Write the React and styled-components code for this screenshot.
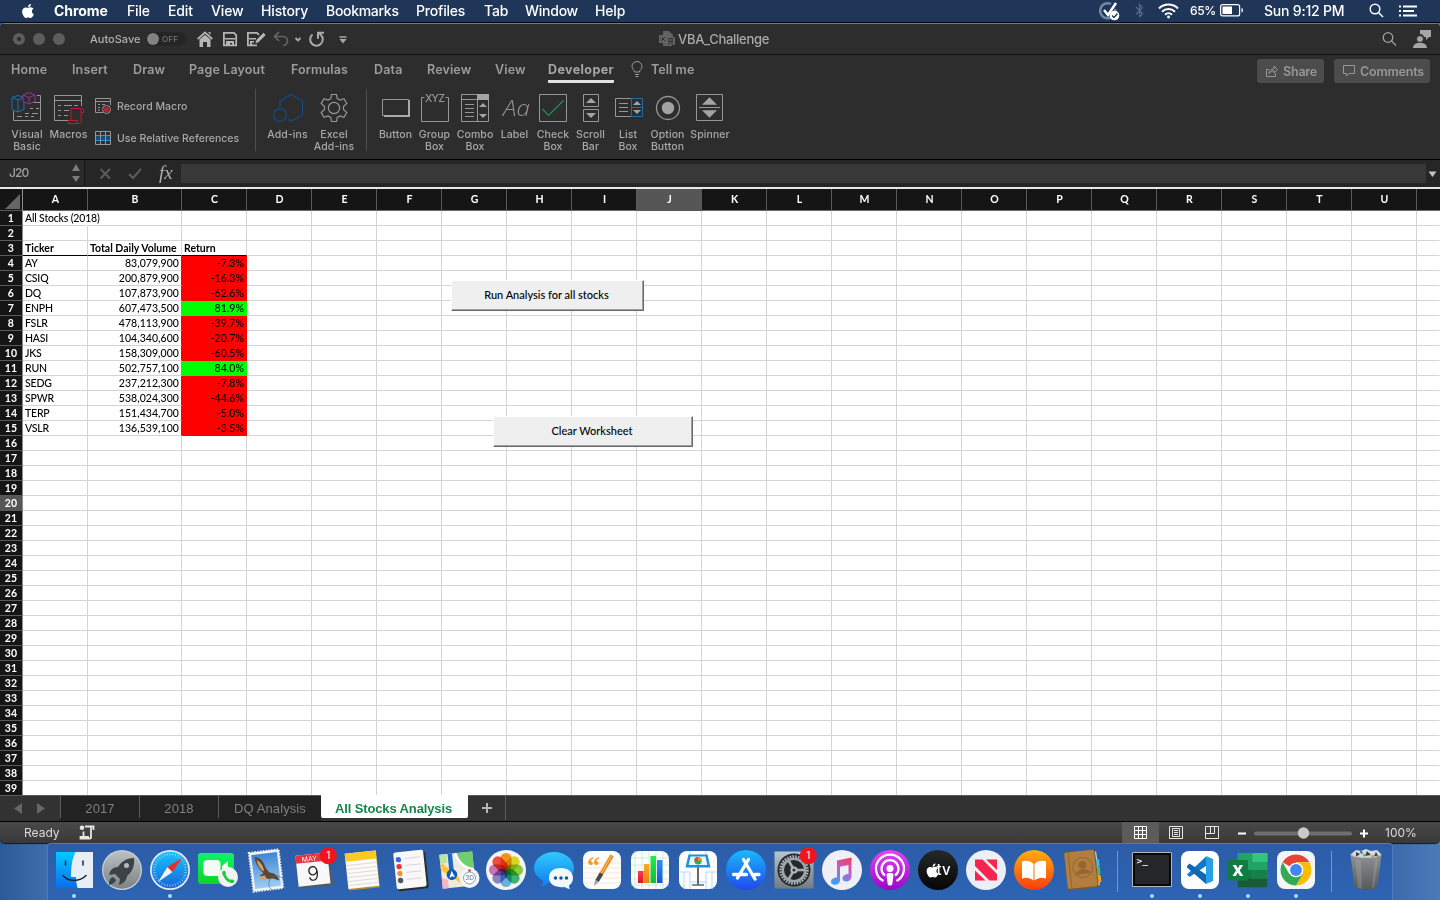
import React from "react";
import styled, { createGlobalStyle } from "styled-components";
import { FaApple, FaBluetoothB } from "react-icons/fa";

const Global = createGlobalStyle`
  * { box-sizing: border-box; }
  body { margin: 0; overflow: hidden; background: #4271b0; font-family: Inter, "Liberation Sans", sans-serif; }
  svg { display: block; flex: none; }
`;

const Desktop = styled.div`
  width: 1440px;
  height: 900px;
  display: flex;
  flex-direction: column;
  overflow: hidden;
  background: linear-gradient(90deg, #2c5a98 0, #3f6fae 50px, #3a6aab 1390px, #4a7ab8 1440px);
`;

/* ---------- system menu bar ---------- */
const MenuBar = styled.header`
  height: 23px;
  flex: none;
  display: flex;
  align-items: center;
  background: #1f3658;
  border-bottom: 1px solid #05080d;
  color: #fff;
  font-size: 14px;
  font-weight: 500;
  padding: 0 0 1px 20px;
`;
const MenuItem = styled.span`
  width: ${(p) => p.$w}px;
  flex: none;
  white-space: nowrap;
  font-weight: ${(p) => (p.$bold ? 700 : 500)};
  letter-spacing: ${(p) => p.$ls ?? -0.15}px;
`;
const AppleSlot = styled.span`
  width: 34px;
  flex: none;
`;
const MenuStatus = styled.div`
  margin-left: auto;
  display: flex;
  align-items: center;
  padding-right: 23px;
`;
const Slot = styled.span`
  width: ${(p) => p.$w}px;
  flex: none;
  white-space: nowrap;
  font-size: ${(p) => p.$size || 14}px;
  letter-spacing: ${(p) => p.$ls || 0}px;
`;

/* ---------- window ---------- */
const Window = styled.main`
  height: 820px;
  flex: none;
  display: flex;
  flex-direction: column;
  border-radius: 5px 5px 5px 5px;
  overflow: hidden;
  background: #2d2d2d;
  box-shadow: 0 1px 1px #10151c;
`;
const TitleBar = styled.div`
  height: 32px;
  flex: none;
  display: flex;
  align-items: center;
  border-top: 1px solid #7a7a7a;
  border-bottom: 1px solid #121212;
  padding-left: 13px;
`;
const Light = styled.i`
  width: 12px;
  height: 12px;
  margin-right: 8px;
  border-radius: 50%;
  background: #5d5d5d;
  display: grid;
  place-items: center;
  &::after {
    content: "";
    width: 4px;
    height: 4px;
    border-radius: 50%;
    background: ${(p) => (p.$dirty ? "#2a2a2a" : "transparent")};
  }
`;
const AutoSave = styled.span`
  width: 56px;
  margin-left: 17px;
  flex: none;
  color: #b0b0b0;
  font-size: 11px;
  font-weight: 500;
  letter-spacing: 0;
  white-space: nowrap;
`;
const Toggle = styled.span`
  width: 40px;
  height: 14px;
  flex: none;
  border-radius: 7px;
  background: #252525;
  display: flex;
  align-items: center;
  gap: 3px;
  color: #767676;
  font-size: 8px;
  font-weight: 500;
  letter-spacing: 0.2px;
  &::before {
    content: "";
    width: 12px;
    height: 12px;
    margin-left: 1px;
    border-radius: 50%;
    background: #828282;
  }
`;
const QuickAccess = styled.div`
  width: 473px;
  display: flex;
  flex: none;
  padding-left: 11px;
`;
const DocTitle = styled.div`
  display: flex;
  align-items: center;
  gap: 3px;
  color: #a9a9a9;
  font-size: 13px;
  font-weight: 500;
  letter-spacing: -0.3px;
`;
const TitleActions = styled.div`
  margin-left: auto;
  display: flex;
  padding-right: 9px;
`;

const TabRow = styled.nav`
  height: 33px;
  flex: none;
  display: flex;
  padding: 6px 10px 0 11px;
  color: #9c9c9c;
  font-size: 12.5px;
  font-weight: 600;
`;
const RibbonTab = styled.span`
  width: ${(p) => p.$w}px;
  height: 22px;
  flex: none;
  line-height: 17px;
  white-space: nowrap;
  letter-spacing: ${(p) => p.$ls ?? 0.15}px;
`;
const ActiveTab = styled(RibbonTab)`
  height: 22px;
  border-bottom: 3px solid #e2e2e0;
  border-radius: 1px;
  color: #a6a6a6;
  font-weight: 700;
`;
const Bulb = styled.span`
  width: 37px;
  padding-left: 17px;
`;
const TabActions = styled.div`
  margin-left: auto;
  display: flex;
  gap: 10px;
  margin-top: -2px;
`;
const ActionButton = styled.button`
  width: ${(p) => p.$w}px;
  height: 24px;
  display: flex;
  align-items: center;
  gap: 4px;
  padding: 0 0 0 8px;
  border: 0;
  border-radius: 3px;
  background: #4c4c4c;
  color: #979797;
  font: 600 12.5px Inter, sans-serif;
  letter-spacing: -0.2px;
`;

const Ribbon = styled.section`
  height: 72px;
  flex: none;
  display: flex;
  padding: 0 0 0 8px;
  border-bottom: 1px solid #000;
`;
const Tool = styled.div`
  width: ${(p) => p.$w}px;
  flex: none;
  display: flex;
  flex-direction: column;
  align-items: center;
  padding-top: 4px;
  color: #a8a8a8;
  font-size: 10.5px;
  font-weight: 500;
  line-height: 12px;
  letter-spacing: 0.1px;
  text-align: center;
  white-space: pre;
  svg { margin-bottom: 5px; }
`;
const MacroList = styled.div`
  width: 160px;
  margin-left: 4px;
  display: flex;
  flex-direction: column;
  gap: 14px;
  padding-top: 9px;
`;
const MacroItem = styled.div`
  height: 18px;
  display: flex;
  align-items: center;
  gap: 5px;
  color: #a8a8a8;
  font-size: 10.5px;
  font-weight: 500;
  letter-spacing: 0.02px;
  white-space: nowrap;
`;
const Divider = styled.i`
  width: 1px;
  height: 62px;
  margin: 1px ${(p) => p.$r}px 0 ${(p) => p.$l}px;
  background: #4e4e4e;
`;

/* ---------- formula bar ---------- */
const FormulaBar = styled.div`
  height: 29px;
  flex: none;
  display: flex;
  background: #262626;
  border-bottom: 2px solid #e6e8e6;
`;
const NameBox = styled.div`
  width: 85px;
  height: 25px;
  display: flex;
  align-items: center;
  justify-content: space-between;
  padding: 0 4px 0 9px;
  background: #2b2b2b;
  border-right: 1px solid #151515;
  color: #a0a0a0;
  font-size: 12px;
  font-weight: 500;
  letter-spacing: -0.9px;
`;
const FormulaInput = styled.div`
  width: 1245px;
  height: 19px;
  margin-top: 4px;
  background: #383838;
`;
const Fx = styled.span`
  width: 36px;
  padding-left: 14px;
  color: #b0b0b0;
  font: italic 19px/26px "Liberation Serif", serif;
  letter-spacing: 0;
`;

/* ---------- sheet ---------- */
const Sheet = styled.section`
  height: 606px;
  flex: none;
  position: relative;
  background: #fff;
  font-family: Lato, "Liberation Sans", sans-serif;
  overflow: hidden;
`;
const SheetRow = styled.div`
  display: flex;
  height: ${(p) => p.$h || 15}px;
`;
const ColHead = styled.div`
  width: ${(p) => p.$w}px;
  flex: none;
  display: flex;
  align-items: center;
  justify-content: center;
  padding: 0 0 1px 1px;
  background: ${(p) => (p.$on ? "#565656" : "#151515")};
  border-right: 1px solid #595959;
  border-bottom: 1px solid ${(p) => (p.$on ? "#565656" : "#6a6a6a")};
  color: #fff;
  font-size: 10.5px;
  font-weight: 700;
`;
const RowHead = styled.div`
  width: 23px;
  flex: none;
  background: ${(p) => (p.$on ? "#565656" : "#151515")};
  border-right: 1px solid #8c8c8c;
  border-bottom: 1px solid #595959;
  color: #fff;
  font-size: 10.5px;
  font-weight: 700;
  line-height: 15px;
  letter-spacing: 0.2px;
  text-align: center;
`;
const Corner = styled(RowHead)`
  padding: 5px 0 0 5px;
`;
const Cell = styled.div`
  width: ${(p) => p.$w}px;
  flex: none;
  padding: 0 2px;
  background: ${(p) => p.$fill || "transparent"};
  border-right: 1px solid ${(p) => p.$right || "#d4d4d4"};
  border-bottom: 1px solid ${(p) => p.$bottom || "#d4d4d4"};
  color: #000;
  font-size: 10.5px;
  font-weight: ${(p) => (p.$bold ? 700 : 500)};
  line-height: 15px;
  letter-spacing: ${(p) => p.$ls ?? -0.18}px;
  text-align: ${(p) => p.$align || "left"};
  white-space: nowrap;
`;
const SheetButton = styled.button`
  position: absolute;
  left: ${(p) => p.$x}px;
  top: ${(p) => p.$y}px;
  width: ${(p) => p.$w}px;
  height: 31px;
  padding: 0 2px 2px 0;
  background: #efefef;
  border: 1px solid #fff;
  border-right-color: #696969;
  border-bottom-color: #696969;
  box-shadow: inset -1px -1px 0 #a0a0a0;
  color: #000;
  font: 500 11px Lato, sans-serif;
  letter-spacing: 0;
`;

/* ---------- sheet tabs and status ---------- */
const SheetTabs = styled.div`
  height: 27px;
  flex: none;
  display: flex;
  background: #323232;
  border-bottom: 1px solid #000;
  border-top: 1px solid #5a5a5a;
  font-family: "Liberation Sans", sans-serif;
`;
const TabNav = styled.div`
  width: 60px;
  height: 25px;
  display: flex;
  align-items: center;
  gap: 15px;
  padding-left: 14px;
`;
const SheetTab = styled.div`
  width: ${(p) => p.$w}px;
  height: 25px;
  display: flex;
  align-items: center;
  justify-content: center;
  background: #222;
  color: #7f7f7f;
  font-size: 13px;
  letter-spacing: 0.1px;
  &::before {
    content: "";
    width: 1px;
    height: 22px;
    margin: -3px auto 0 0;
    background: #5c5c5c;
  }
  &::after {
    content: "";
    width: 0;
    margin-left: auto;
  }
`;
const ActiveSheetTab = styled.div`
  width: 147px;
  height: 23px;
  margin-top: -1px;
  padding-right: 2px;
  border-radius: 0 0 2px 2px;
  background: #fff;
  color: #10884f;
  font-size: 13px;
  font-weight: 700;
  line-height: 27px;
  letter-spacing: -0.12px;
  text-align: center;
`;
const AddSheet = styled.div`
  width: 38px;
  height: 24px;
  display: grid;
  place-items: center;
  border-right: 1px solid #5c5c5c;
`;
const StatusBar = styled.footer`
  height: 21px;
  flex: none;
  display: flex;
  align-items: center;
  background: linear-gradient(#484848, #393939);
  color: #dcdcdc;
  font-size: 12px;
  padding-left: 24px;
`;
const StatusText = styled.span`
  width: ${(p) => p.$w}px;
  flex: none;
  white-space: nowrap;
`;
const ViewButton = styled.span`
  width: ${(p) => p.$w}px;
  height: 21px;
  display: grid;
  place-items: center;
  background: ${(p) => (p.$on ? "#5b5b5b" : "transparent")};
`;
const Zoom = styled.div`
  display: flex;
  align-items: center;
  margin-left: 7px;
`;
const Spacer = styled.i`
  flex: 1;
`;

/* ---------- dock ---------- */
const Dock = styled.div`
  width: 1346px;
  height: 57px;
  margin-left: 47px;
  flex: none;
  display: flex;
  align-items: flex-start;
  padding: 2px 0 0 2px;
  border: 1px solid #4a7cc0;
  border-bottom: 0;
  border-radius: 4px 4px 0 0;
  background: linear-gradient(#2c5ca6, #2d64b4);
`;
const DockItem = styled.div`
  width: 48px;
  height: 54px;
  flex: none;
  display: flex;
  flex-direction: column;
  align-items: center;
  &::after {
    content: "";
    width: 4px;
    height: 4px;
    border-radius: 50%;
    background: ${(p) => (p.$running ? "#a9dcff" : "transparent")};
  }
`;
const DockLine = styled.i`
  width: 1px;
  height: 41px;
  margin: 5px ${(p) => p.$r}px 0 ${(p) => p.$l}px;
  background: #6c98d6;
`;
const Petal = styled.rect`
  mix-blend-mode: multiply;
`;

/* ---------- toolbar drawings ---------- */
const G = "#969696";
const Ico = ({ w = 32, h = 32, vb, children, s = G, sw = 1 }) => (
  <svg width={w} height={h} viewBox={vb || `0 0 ${w} ${h}`} fill="none" stroke={s} strokeWidth={sw}>
    {children}
  </svg>
);

const VisualBasicIcon = () => (
  <Ico>
    <path d="M2.500 19v9.500h27v-25H26M15.500 10.500H30M19 16.500h3m3 0h3M14 21.500h4m3 0h6M6 24.500h5m3 0h3m3 0h3" />
    <path d="M7 3.500l6 2v12l-6 2.500-6-2.500v-12zM1 5.500l6 2.500 6-2.500M7 8v12" stroke="#1a75ae" fill="#2d2d2d" />
    <path d="M18 .5l6 2.500v6.500l-6 2.500-6-2.500V3zM12 3l6 2.500L24 3M18 5.500V12" stroke="#933393" fill="#2d2d2d" />
  </Ico>
);
const MacrosIcon = () => (
  <Ico>
    <path d="M16 28.500H1.500v-25h27V14M1.500 8.500h27M5 13.500h3m3 0h8m2 0h4M5 18.500h3m3 0h5M5 23.500h3m3 0h4" />
    <path d="M18 16.500v12h-3v3h11.500c1 0 1.500-1 1.500-2v-9h2.500v-2.500c0-1-1-1.500-2-1.500H18M28 20v-2M15.500 28.500h9v3" stroke="#bb1c33" />
  </Ico>
);
const RecordIcon = () => (
  <Ico w={17} h={18}>
    <path d="M8 15.500H.5V1.500h15V8M.5 4.500h15M3 7.500h2m2 0h3M3 10.500h2M3 13h2" />
    <circle cx="11.500" cy="12.500" r="4" />
    <circle cx="11.500" cy="12.500" r="2.600" fill="#c21f38" stroke="none" />
  </Ico>
);
const RelativeIcon = () => (
  <Ico w={17} h={18}>
    <path fill="#0f4e86" stroke="none" d="M1 6h15v5H1z" />
    <path d="M.5 2.500h15v13H.5zM5.500 2.500v13M10.500 2.500v13" />
    <path d="M1 6.500h14M1 11.500h14" stroke="#4393ca" />
  </Ico>
);
const AddinsIcon = () => (
  <Ico s="#104d88" sw={1.2}>
    <path d="M8 14.500V9.500L19 2.500l11.500 6.500v14L19 29l-3-1.700M8 16l6 3.300v7L8 29.500 2 26.200v-7z" />
  </Ico>
);
const GearIcon = () => (
  <Ico sw={1.2}>
    <path d="M13.500 2.500h5l.7 4 2.800 1.600 3.900-1.400 2.900 4.700-3.300 3.100v3l3.300 3.100-2.900 4.700-3.900-1.400-2.800 1.600-.7 4h-5l-.7-4-2.800-1.600-3.900 1.400-2.900-4.700 3.300-3.100v-3l-3.300-3.100 2.900-4.700L10 8.100l2.800-1.600z" />
    <circle cx="16" cy="16" r="5.600" />
  </Ico>
);
const ButtonIcon = () => (
  <Ico>
    <path d="M2.500 7.500h26v16h-26z" />
    <path d="M28 8h2v17H4v-2h24z" fill="#aaa" stroke="none" />
  </Ico>
);
const GroupIcon = () => (
  <Ico>
    <path d="M5.500 5.500h-3v24h27v-24h-3" />
    <text x="6" y="9.500" fontSize="10.500" fontFamily="Inter" fill={G} stroke="none" textLength="20">XYZ</text>
  </Ico>
);
const Up = ({ x, y, r = 4, d = 1 }) => <path d={`M${x - r} ${y + (d * r) / 2}h${2 * r}l${-r} ${-d * r}z`} fill="#a3a3a3" stroke="none" />;
const ComboIcon = () => (
  <Ico>
    <path d="M2.500 2.500h27v27h-27zM2.500 7.500h27M18.500 2.500v27M6 12.500h9M6 16.500h9M6 20.500h9M6 24.500h9" />
    <path fill="#a3a3a3" stroke="none" d="M18 2h12v6H18z" />
    <Up x={24} y={13} /><Up x={24} y={24} d={-1} />
  </Ico>
);
const LabelIcon = () => (
  <Ico>
    <text x="4" y="24" fontSize="22" fontStyle="italic" fontFamily="Open Sans" fontWeight="300" fill={G} stroke="none" textLength="27" lengthAdjust="spacingAndGlyphs">Aa</text>
  </Ico>
);
const CheckIcon = () => (
  <Ico>
    <path d="M2.500 2.500h27v27h-27z" />
    <path d="M5.500 17l6 6.500L26.500 8.500" stroke="#1e9455" strokeWidth="1.200" />
  </Ico>
);
const ScrollIcon = () => (
  <Ico>
    <path d="M8.500 2.500h15v12h-15zM8.500 17.500h15v12h-15z" />
    <Up x={16} y={8.500} r={5} /><Up x={16} y={23.500} r={5} d={-1} />
  </Ico>
);
const ListIcon = () => (
  <Ico>
    <path d="M19 6.500H3.500v18H19M7 11.500h9M7 15.500h9M7 19.500h9" />
    <path d="M19.500 6.500h11v18h-11zM19.500 15.500h11" stroke="#1b6fa8" />
    <Up x={25} y={11} /><Up x={25} y={20} d={-1} />
  </Ico>
);
const OptionIcon = () => (
  <Ico sw={1.3}>
    <circle cx="16" cy="16" r="11.500" />
    <circle cx="16" cy="16" r="6.200" fill="#a3a3a3" stroke="none" />
  </Ico>
);
const SpinnerIcon = () => (
  <Ico>
    <path d="M2.500 2.500h26v26h-26zM5 15.500h21" />
    <Up x={15.500} y={9} r={7.500} /><Up x={15.500} y={22} r={7.500} d={-1} />
  </Ico>
);

/* ---------- dock drawings ---------- */
const D = ({ children }) => <svg width="48" height="48" viewBox="0 0 48 48">{children}</svg>;
const Grad = ({ id, a, b, h }) => (
  <linearGradient id={id} x1="0" y1="0" x2={h ? 1 : 0} y2={h ? 0 : 1}>
    <stop offset="0" stopColor={a} /><stop offset="1" stopColor={b} />
  </linearGradient>
);
const Badge = () => (
  <g>
    <circle cx="38.300" cy="9.700" r="8.600" fill="#f01420" />
    <text x="38.300" y="13.300" fontSize="10" fontFamily="Inter" fill="#fff" textAnchor="middle">1</text>
  </g>
);
const Ball = ({ fill }) => <circle cx="24" cy="24" r="20" fill={fill} />;
const spin = (n, fn) => Array.from({ length: n }, (_, i) => fn((i * 360) / n, i));

const Finder = () => (
  <D>
    <defs><Grad id="fi" a="#04c8ff" b="#0b6df0" /></defs>
    <path fill="url(#fi)" d="M6 6h37v36H6z" />
    <path fill="#e8eef6" d="M25.500 6H43v36H27.500c-1-4-1.500-7-1.500-11h-5c0-10 1-18 4.500-25z" />
    <path d="M15.500 15v4M33 15v4M13 29.500c5 6.500 17 6.500 23 0" fill="none" stroke="#17263c" strokeWidth="1.500" strokeLinecap="round" />
  </D>
);
const Launchpad = () => (
  <D>
    <defs><Grad id="la" a="#b9c1c4" b="#7d8283" /></defs>
    <Ball fill="#c9d0d4" /><circle cx="24" cy="24" r="18.800" fill="url(#la)" />
    <path fill="#3d4246" d="M36 12c-8 0-13 4-16 9-5 0-8 3-9 8l6-1 5 5-1 6c4-1 8-5 8-9 5-4 8-10 7-18zM15 31c-3 1-4 4-4 8 3-1 6-2 7-5z" />
    <circle cx="28.500" cy="19.500" r="2.500" fill="#b5babd" />
  </D>
);
const Safari = () => (
  <D>
    <defs><Grad id="sa" a="#17c3fb" b="#1866d8" /></defs>
    <Ball fill="#e8eaec" /><circle cx="24" cy="24" r="18.300" fill="url(#sa)" />
    {spin(36, (a) => <path key={a} d="M24 7v2.500" stroke="#b9e3fa" strokeWidth=".6" transform={`rotate(${a} 24 24)`} />)}
    <path fill="#f3f3f3" d="M12 36l9.500-15 5 5z" /><path fill="#ee2c2c" d="M36.500 11.500L21.500 21l5 5z" />
  </D>
);
const FaceTime = () => (
  <D>
    <defs><Grad id="ft" a="#0df36a" b="#10d32c" /></defs>
    <rect x="4" y="7" width="36" height="31" rx="3" fill="url(#ft)" />
    <rect x="9.500" y="14" width="17" height="16" rx="4" fill="#f4fbf4" /><path fill="#f4fbf4" d="M28 20l6-5v14l-6-4z" />
    <circle cx="34" cy="31" r="10" fill="#f2f4f3" />
    <path fill="none" stroke="#18cc3c" strokeWidth="2.600" strokeLinecap="round" d="M30 27c0 4 4 8.500 8 8.500" />
    <path fill="none" stroke="#18cc3c" strokeWidth="3.400" strokeLinecap="round" d="M30 26.500v1.300M37.300 35.300h1.200" />
  </D>
);
const Mail = () => (
  <D>
    <defs><Grad id="ma" a="#3d86d6" b="#9fcdf2" /></defs>
    <g transform="rotate(-7 24 24)">
      <rect x="9" y="5" width="30" height="39" fill="#f2f4f5" stroke="#f2f4f5" strokeWidth="2" strokeDasharray="1.500 1.300" />
      <path fill="url(#ma)" d="M11 7.500h26v34H11z" />
      <path fill="#5f4630" d="M14 10c6 0 9 6 10 12l3 5c5 1 8 4 9 9l-7-3c-5 1-9-1-12-4l4-2c-4-5-7-11-7-17z" />
      <path fill="#c9a574" d="M16 13c4 3 6 7 6 12l-2-1c-3-4-4-7-4-11zM16 30l6-1 2 4-5 1z" />
      <circle cx="33" cy="39" r="8" fill="none" stroke="#37608c" strokeWidth=".7" opacity=".7" />
    </g>
  </D>
);
const CalendarApp = () => (
  <D>
    <g transform="rotate(-6 24 24)">
      <path fill="#555b61" d="M9 10h31l2 31H8z" />
      <path fill="#f8f8f8" d="M7 8h32v31H7z" /><path fill="#e5343e" d="M7 8h32v8H7z" />
      <text x="20.500" y="14.800" fontSize="6.800" fontFamily="Inter" fill="#fff" textAnchor="middle">MAY</text>
      <text x="23" y="34.500" fontSize="20" fontFamily="Inter" fontWeight="300" fill="#222" textAnchor="middle">9</text>
    </g>
    <Badge />
  </D>
);
const Notes = () => (
  <D>
    <g transform="rotate(-6 24 24)">
      <path fill="#b08c2b" d="M9 7h31v36H9z" /><path fill="#fbfaf6" d="M8.500 6h31v35.500h-31z" /><path fill="#fbc924" d="M8.500 6h31v8h-31z" />
      <path stroke="#cfcfcf" strokeWidth=".7" d="M9 18h30M9 22h30M9 26h30M9 30h30M9 34h30M9 38h30" />
    </g>
  </D>
);
const Reminders = () => (
  <D>
    <g transform="rotate(-6 24 24)">
      <rect x="10" y="7" width="31" height="37" rx="2" fill="#2a2d31" /><rect x="9" y="5" width="30" height="37" rx="2" fill="#f8f8f8" />
      {["#2f68e8", "#ee3131", "#f5932a", "#4a5560"].map((c, i) => <circle key={c} cx="13.500" cy={12.500 + i * 7} r="2.700" fill={c} />)}
      <path stroke="#c9c9c9" strokeWidth=".7" d="M20 12h15M20 19h15M20 26h15M20 33h15" />
    </g>
  </D>
);
const Maps = () => (
  <D>
    <g transform="rotate(-6 24 24)">
      <path fill="#efe9de" d="M7 7h33v34H7z" /><path fill="#6fcf6e" d="M23 7h17v18C31 22 25 16 23 7z" /><path fill="#b9e3a2" d="M7 7h7v9H7z" />
      <path d="M23 7c2 9 8 16 17 18" stroke="#fff" strokeWidth="2.500" fill="none" /><path d="M8 17l17 18 8-8M8 21l21 17" stroke="#fac637" strokeWidth="3.500" fill="none" />
      <path fill="#f6b4c2" d="M7 30l6 3v8H7z" /><path d="M17.500 7v20" stroke="#1c66c4" strokeWidth="4.500" />
      <circle cx="17.500" cy="28" r="5.300" fill="#1459b8" /><path fill="#fff" d="M17.500 24l2.800 7-2.800-1.500-2.800 1.500z" />
    </g>
    <circle cx="35.500" cy="32" r="10" fill="#f4f5f6" /><circle cx="35.500" cy="32" r="6" fill="#fff" stroke="#72879a" strokeWidth=".8" />
    <text x="35.500" y="34.400" fontSize="6.500" fontFamily="Inter" fill="#51708c" textAnchor="middle">3D</text>
    <circle cx="35.500" cy="24.500" r="1.300" fill="#e33" />
  </D>
);
const Photos = () => (
  <D>
    <Ball fill="#f4f4f2" />
    {["#fb9a1e", "#e3df20", "#93d13f", "#3fbb7a", "#6db9e6", "#8f8ad0", "#d07ac0", "#f6513f"].map((c, i) => (
      <Petal key={c} x="18.500" y="7" width="11" height="17" rx="5.500" fill={c} transform={`rotate(${i * 45} 24 24)`} />
    ))}
  </D>
);
const Messages = () => (
  <D>
    <defs><Grad id="me" a="#30c8fb" b="#0f7df5" /></defs>
    <path fill="url(#me)" d="M24 6c11 0 20 7 20 16s-9 15-20 15c-2 0-4 0-5-.500-2 2-5 4-8.500 4 2-2 3-4 2.500-6C7.500 32 4 27 4 22 4 13 13 6 24 6z" />
    <path fill="#f2f7fc" d="M31 22c7 0 12 4 12 10 0 4-2 6-4 7.500 0 1.500.5 2.500 1 3.500-2-.3-4-1-5-2-8 1-16-2-16-9s5-10 12-10z" />
    <path stroke="#195594" strokeWidth="3.600" strokeLinecap="round" d="M25.500 32h0M31 32h0M36.500 32h0" />
  </D>
);
const Card = ({ fill = "#fcfcfc" }) => <rect x="5" y="5" width="38" height="38" rx="8" fill={fill} />;
const Pages = () => (
  <D>
    <Card /><path stroke="#f4dfca" strokeWidth=".7" d="M5 17h38M5 22h38M5 27h38M5 32h38M5 37h38" />
    <text x="9" y="28" fontSize="26" fontFamily="Liberation Serif" fontWeight="700" fill="#f59a2b">“</text>
    <path stroke="#e88b22" strokeWidth="4" d="M34 9.500L22 30" /><path stroke="#ffc064" strokeWidth="1" d="M33.500 10L21 31" /><path stroke="#45484b" strokeWidth="4" d="M23.500 27.500L19 35" /><path fill="#9aa0a5" d="M17.300 33.800l3.600 2L16 40z" />
  </D>
);
const Numbers = () => (
  <D>
    <defs><Grad id="n1" a="#ff3a52" b="#d8122e" /><Grad id="n2" a="#ffab24" b="#e8810e" /><Grad id="n3" a="#24ec4b" b="#0fbb39" /><Grad id="n4" a="#2a94f7" b="#1a52d6" /></defs>
    <Card /><path stroke="#bfeacb" strokeWidth=".7" d="M5 12h38M5 19h38M5 26h38M5 33h38M5 39h38M9 5v38M16 5v38M23 5v38M30 5v38M37 5v38" />
    <path fill="url(#n1)" d="M12 25h5.500v12H12z" /><path fill="url(#n2)" d="M18 18h5.500v19H18z" /><path fill="url(#n3)" d="M24.500 10H30v27h-5.500z" /><path fill="url(#n4)" d="M31 14h5.500v23H31z" />
  </D>
);
const Keynote = () => (
  <D>
    <Card /><path fill="none" stroke="#b8d8f2" strokeWidth="1" d="M5 26h11v10h16V26h11M16 5v4M32 5v4M16 36v7M32 36v7M10 26v17M38 26v17" />
    <path stroke="#5e6b77" strokeWidth="2" d="M24 20v19" /><path stroke="#5e6b77" strokeWidth="1.500" d="M18 39h12" />
    <path fill="#1793df" d="M14.500 8.500h19l3 13h-25z" /><path fill="#eef6fc" d="M16.500 10.500h15l1.800 8.500H14.700z" />
    <circle cx="24" cy="14.800" r="3.700" fill="#28b24b" /><path fill="#f39220" d="M24 14.800v-3.700a3.700 3.700 0 013.700 3.700z" /><path fill="#e43f62" d="M24 14.800h-3.700a3.700 3.700 0 013.700-3.700z" />
  </D>
);
const AppStore = () => (
  <D>
    <defs><Grad id="as" a="#1ab8fb" b="#2148ee" /></defs><Ball fill="url(#as)" />
    <path d="M26.500 13.500L15.500 32M21.500 13.500L33 33M11.500 28.500h13m8 0h4.500" stroke="#fff" strokeWidth="3.300" strokeLinecap="round" />
  </D>
);
const Settings = () => (
  <D>
    <defs><Grad id="se" a="#b5c6cf" b="#737b7f" /></defs>
    <path fill="url(#se)" d="M4.500 5.500h39v37h-39z" /><circle cx="24" cy="24" r="16.500" fill="#25292c" />
    <circle cx="24" cy="24" r="13.500" fill="none" stroke="#b4bcc0" strokeWidth="2.500" strokeDasharray="1.600 1.200" /><circle cx="24" cy="24" r="11.300" fill="none" stroke="#9ea6aa" strokeWidth="2.600" />
    {spin(3, (a) => <path key={a} d="M24 24H35" stroke="#a6adb1" strokeWidth="2.600" transform={`rotate(${a} 24 24)`} />)}
    <circle cx="24" cy="24" r="3.600" fill="#b4bcc0" /><circle cx="24" cy="24" r="1.600" fill="#303538" /><Badge />
  </D>
);
const Music = () => (
  <D>
    <defs>
      <linearGradient id="mu" gradientUnits="userSpaceOnUse" x1="30" y1="12" x2="18" y2="37"><stop offset="0" stopColor="#fb3c62" /><stop offset=".5" stopColor="#b264d8" /><stop offset="1" stopColor="#3f9df8" /></linearGradient>
    </defs>
    <Ball fill="#eef0f5" />
    <path fill="url(#mu)" d="M19 14.500l14.500-3v19c0 6-9 6.500-9 2 0-3 3-4.500 6-4.500v-9l-8.500 1.800V34c0 6-9 6-9 2 0-3 3-4.500 6-4.500z" />
  </D>
);
const Podcasts = () => (
  <D>
    <defs><Grad id="po" a="#e343f7" b="#9909c8" /></defs><Ball fill="url(#po)" />
    <path fill="none" stroke="#fff" strokeWidth="2.200" d="M17.500 35a14 14 0 1113 0M19 29.500a8.500 8.500 0 1110 0" />
    <circle cx="24" cy="22.500" r="3.500" fill="#fff" /><path fill="#fff" d="M20.500 29c0-3 7-3 7 0l-1.200 9c-.3 2-4.300 2-4.600 0z" />
  </D>
);
const AppleTv = () => (
  <D>
    <defs><Grad id="tv" a="#26282b" b="#050505" /></defs><Ball fill="url(#tv)" />
    <FaApple x="10.500" y="16.500" width="12" height="14" color="#fff" />
    <text x="22.500" y="29" fontSize="15" fontFamily="Inter" fontWeight="500" fill="#fff">tv</text>
  </D>
);
const News = () => (
  <D>
    <Ball fill="#eceff3" />
    <path fill="#f6244f" d="M13 13.500h7.500L35 28v6.500h-7.500L13 20zM24 13.500h11V24zM13 24.500l10.500 10H13z" />
  </D>
);
const Books = () => (
  <D>
    <defs><Grad id="bo" a="#ffae10" b="#fa3d0c" /></defs><Ball fill="url(#bo)" />
    <path fill="#fff" d="M23.500 18c-3-3.500-8-4-11.500-2.500v17c4-1.500 8-1 11.500 2zM24.500 18c3-3.500 8-4 11.500-2.500v17c-4-1.500-8-1-11.500 2z" />
  </D>
);
const Contacts = () => (
  <D>
    <g transform="rotate(-6 24 24)">
      <path fill="#eee" d="M37 7h3v34h-3z" /><path fill="#46b8e6" d="M38 15h4v7h-4z" /><path fill="#46c066" d="M38 23h4v7h-4z" /><path fill="#f3a21c" d="M38 31h4v7h-4z" />
      <rect x="8" y="5" width="31" height="38" rx="2" fill="#7e552a" /><rect x="8" y="5" width="30" height="36.500" rx="2" fill="#b27d3e" />
      <path stroke="#956530" d="M12 5v36" /><g fill="#966632"><circle cx="25" cy="19" r="4" /><path d="M17.500 28c1-6 14-6 15 0z" /></g>
      <circle cx="25" cy="21.500" r="10" fill="none" stroke="#966632" />
    </g>
  </D>
);
const Terminal = () => (
  <D>
    <rect x="4" y="6" width="40" height="35" rx="1.500" fill="#b4b8ba" /><path fill="#080808" d="M5 7h38v33H5z" /><path fill="#242627" d="M7 9h34v29H7z" />
    <text x="8.500" y="18" fontSize="9.500" fontFamily="DejaVu Sans Mono" fontWeight="700" fill="#f2f2f2">&gt;_</text>
  </D>
);
const Code = () => (
  <D>
    <Card fill="#fff" />
    <path fill="#1078c8" d="M11 28.500L30 10.500V20L13.500 31z" /><path fill="#1168b0" d="M11 20l2.500-2.500L30 28.500V38L11 21.500z" />
    <path fill="#27a0ec" d="M30 10l7 3v22l-7 3z" />
  </D>
);
const Excel = () => (
  <D>
    <path fill="#21a366" d="M13.500 7h30v34.500h-30z" /><path fill="#33c481" d="M28.500 7h15v9h-15z" /><path fill="#107c41" d="M13.500 24h15v9h-15z" /><path fill="#17804a" d="M28.500 24h15v8.500h-15z" /><path fill="#185c37" d="M13.500 32.500h30v9h-30z" />
    <rect x="4" y="14" width="20" height="20.500" rx="1.500" fill="#107c41" />
    <text x="14" y="29.500" fontSize="15" fontFamily="Open Sans" fontWeight="800" fill="#fff" textAnchor="middle">X</text>
  </D>
);
const Chrome = () => (
  <D>
    <Card fill="#f5f5f5" />
    <path fill="#ea4335" d="M24 24L10.600 16.250A15.500 15.500 0 0137.400 16.250L24 16.250z" />
    <path fill="#fbbc05" d="M37.400 16.250A15.500 15.500 0 0124 39.500L30.700 27.800 24 16.250z" />
    <path fill="#34a853" d="M10.600 16.250A15.500 15.500 0 0024 39.500L30.700 27.900 17.300 27.900z" />
    <circle cx="24" cy="24" r="7.300" fill="#fff" /><circle cx="24" cy="24" r="5.900" fill="#4285f4" />
  </D>
);
const Trash = () => (
  <D>
    <defs><Grad id="tr" a="#8d9193" b="#55595b" /></defs>
    <path fill="#d5dadc" d="M9 8l5-4 5 1 5-2 5 2 6-1 4 4-1 6H10z" /><path fill="#3f4447" d="M14 6l4 2-4 3zM25 5l4 4-6 1zM34 6l3 5-5-1zM18 5l3 1-2 2z" />
    <path fill="#34b8a8" d="M20 7l4 2-2 2z" /><path fill="#cf4c39" d="M30 9l3 2-4 1z" />
    <path fill="url(#tr)" d="M8.500 9c6 4 25 4 31 0l-4 31c-1 5-22 5-23 0z" /><path fill="none" stroke="#b9bdbf" d="M8.500 8.500c6 4 25 4 31 0" />
    <path fill="#aeb2b4" opacity=".3" d="M13 13l6 1 1 29-4-1zM33 13l3-1-4 29-2 1z" />
  </D>
);

/* ---------- data ---------- */
const menus = [["File", 41], ["Edit", 43], ["View", 50], ["History", 65, -0.15], ["Bookmarks", 90, -0.3], ["Profiles", 68, -0.2], ["Tab", 41], ["Window", 70, -0.25], ["Help", 40]];
const tabs = [["Home", 61], ["Insert", 61], ["Draw", 56], ["Page Layout", 102], ["Formulas", 83], ["Data", 53], ["Review", 68], ["View", 53]];
const letters = "ABCDEFGHIJKLMNOPQRSTU".split("");
const colWidth = (c) => (c === "B" ? 94 : 65);
const stocks = [
  ["AY", "83,079,900", "-7.3%"], ["CSIQ", "200,879,900", "-16.3%"], ["DQ", "107,873,900", "-62.6%"], ["ENPH", "607,473,500", "81.9%"],
  ["FSLR", "478,113,900", "-39.7%"], ["HASI", "104,340,600", "-20.7%"], ["JKS", "158,309,000", "-60.5%"], ["RUN", "502,757,100", "84.0%"],
  ["SEDG", "237,212,300", "-7.8%"], ["SPWR", "538,024,300", "-44.6%"], ["TERP", "151,434,700", "-5.0%"], ["VSLR", "136,539,100", "-3.5%"],
];
const dock = [[Finder, 1], [Launchpad], [Safari, 1], [FaceTime], [Mail], [CalendarApp], [Notes], [Reminders], [Maps], [Photos], [Messages], [Pages], [Numbers], [Keynote], [AppStore], [Settings], [Music], [Podcasts], [AppleTv], [News], [Books], [Contacts]];
const dockRight = [Terminal, Code, Excel, Chrome];

function GridRow({ n }) {
  const stock = stocks[n - 4];
  const fill = stock && (stock[2][0] === "-" ? "#ff0000" : "#00ff00");
  return (
    <SheetRow>
      <RowHead $on={n === 20}>{n}</RowHead>
      {letters.map((c, i) => {
        const p = { $w: colWidth(c) };
        let text = "";
        if (n === 1 && c === "A") { text = "All Stocks (2018)"; p.$right = "transparent"; }
        if (n === 3 && i < 3) { text = ["Ticker", "Total Daily Volume", "Return"][i]; p.$bold = true; p.$bottom = "#000"; p.$ls = 0; }
        if (stock && i < 3) {
          text = stock[i];
          if (i > 0) { p.$align = "right"; p.$ls = 0.05; }
          if (i === 1) p.$right = fill;
          if (i === 2) { p.$fill = fill; p.$bottom = fill; p.$right = fill; }
        }
        return <Cell key={c} {...p}>{text}</Cell>;
      })}
      <Cell $w={23} $right="transparent" />
    </SheetRow>
  );
}

export default function App() {
  return (
    <Desktop>
      <Global />
      <MenuBar>
        <AppleSlot><FaApple size={16} /></AppleSlot>
        <MenuItem $w={73} $bold $ls={-0.05}>Chrome</MenuItem>
        {menus.map(([t, w, ls]) => <MenuItem key={t} $w={w} $ls={ls}>{t}</MenuItem>)}
        <MenuStatus>
          <Slot $w={33}>
            <svg width="21" height="20" viewBox="0 0 21 20" fill="none">
              <path d="M12 3a7.500 7.500 0 104 5" stroke="#7486a3" strokeWidth="2.500" />
              <path d="M5 9l4 5 8-12" stroke="#fff" strokeWidth="2.500" />
              <circle cx="15.500" cy="14.500" r="4.800" fill="#fff" /><path d="M13 14.500l2 2 3.500-4" stroke="#1f3658" strokeWidth="1.300" />
            </svg>
          </Slot>
          <Slot $w={26}><FaBluetoothB size={15} color="#566a8b" /></Slot>
          <Slot $w={32}>
            <svg width="21" height="16" viewBox="0 0 21 16" fill="none" stroke="#fff" strokeWidth="2">
              <path d="M1 5.500a13.500 13.500 0 0119 0M4 8.700a9.300 9.300 0 0113 0M7 11.700a5 5 0 017 0" /><circle cx="10.500" cy="14" r="1.400" fill="#fff" stroke="none" />
            </svg>
          </Slot>
          <Slot $w={30} $size={12} $ls={-0.35}>65%</Slot>
          <Slot $w={44}>
            <svg width="24" height="13" viewBox="0 0 24 13"><rect x=".6" y=".6" width="19" height="11.300" rx="2" fill="none" stroke="#fff" strokeWidth="1.200" /><path fill="#fff" d="M2.500 2.500h9.500v7.500H2.500zM21.500 4c2 .5 2 4 0 4.500z" /></svg>
          </Slot>
          <Slot $w={105} $ls={-0.2}>Sun 9:12 PM</Slot>
          <Slot $w={30}>
            <svg width="15" height="15" viewBox="0 0 15 15" fill="none" stroke="#fff" strokeWidth="1.500"><circle cx="6" cy="6" r="4.800" /><path d="M9.500 9.500l4.500 4.500" /></svg>
          </Slot>
          <svg width="18" height="12" viewBox="0 0 18 12" stroke="#fff" strokeWidth="2"><path d="M0 1.500h2M4 1.500h14M0 6h2M4 6h11M0 10.500h2M4 10.500h14" /></svg>
        </MenuStatus>
      </MenuBar>

      <Window>
        <TitleBar>
          <Light $dirty /><Light /><Light />
          <AutoSave>AutoSave</AutoSave>
          <Toggle>OFF</Toggle>
          <QuickAccess>
            <svg width="156" height="18" viewBox="0 0 156 18" fill="none" stroke="#b5b5b5" strokeWidth="1.800">
              <path d="M.7 9L8 2.300 15.300 9" strokeWidth="1.700" /><path d="M2.500 9.500L8 4.800l5.500 4.700V17H10v-5H6v5H2.500zM11.500 2h2v3l-2-2z" fill="#b5b5b5" stroke="none" />
              <path d="M26.900 2.900H37l2.200 2.200v10.200H26.900z" /><path fill="#b5b5b5" stroke="none" d="M28 8h10v1.500H28zM29 11h8v5h-2v-3h-2v3h-4z" />
              <path d="M60 15.300H50.900V2.900H60l2 2" /><path fill="#b5b5b5" stroke="none" d="M52 8h7v1.500h-7zM53 11h4v1.500h-2V16h-2z" /><path d="M58 14l1-4 7.500-7.500L69 5l-7.500 7.500z" fill="#b5b5b5" stroke="#2d2d2d" strokeWidth=".6" />
              <path d="M77.500 6.500H86a4.500 4.500 0 010 9M82 2l-4.500 4.500L82 11" stroke="#656565" strokeWidth="1.700" />
              <path d="M98.500 8l2.500 2.500 2.500-2.500" stroke="#aaa" />
              <path d="M115.500 4.500a6.300 6.300 0 108.500.5l-1.500-1.300M127 2.800h-6v6" strokeWidth="2" stroke="#aaa" />
              <path d="M142.500 7h7" stroke="#aaa" strokeWidth="1.300" /><path d="M142.500 9h7l-3.500 4.500z" fill="#aaa" stroke="none" />
            </svg>
          </QuickAccess>
          <DocTitle>
            <svg width="16" height="16" viewBox="0 0 16 16"><path fill="#626262" d="M4 0h6l4 4v2h2v8h-3v1H4v-3H0V4h4z" /><path stroke="#303030" d="M2 6l4 4M6 6l-4 4M10 7v7M13 8v6M10 7.500h4M10 10.500h4" fill="none" /></svg>
            VBA_Challenge
          </DocTitle>
          <TitleActions>
            <svg width="49" height="20" viewBox="0 0 49 20" fill="none" stroke="#a0a0a0" strokeWidth="1.300">
              <circle cx="6" cy="8.500" r="4.800" /><path d="M9.500 12l4.500 4.500" /><path stroke="none" fill="#a6a6a6" d="M38 1h11v7h-2l-3 3V8h-2a4 4 0 00-4-3zM31 19c0-7 14-7 14 0z" /><circle cx="38" cy="10" r="3.300" fill="#a6a6a6" stroke="#2d2d2d" strokeWidth=".7" />
            </svg>
          </TitleActions>
        </TitleBar>

        <TabRow>
          {tabs.map(([t, w]) => <RibbonTab key={t} $w={w}>{t}</RibbonTab>)}
          <ActiveTab $w={66} $ls={0.4}>Developer</ActiveTab>
          <Bulb><svg width="12" height="16" viewBox="0 0 12 16" fill="none" stroke="#999"><path d="M3.500 11C3.500 9 1 8 1 5.500a5 5 0 0110 0C11 8 8.500 9 8.500 11zM4 13.500h4M4.500 15.500h3" /></svg></Bulb>
          <RibbonTab $w={60} $ls={0.05}>Tell me</RibbonTab>
          <TabActions>
            <ActionButton $w={67}>
              <svg width="14" height="14" viewBox="0 0 14 14" fill="none" stroke="#979797"><path d="M4 5.500H1.500v7h9V9M4 9.500c0-3 2-4.500 5-4.500V2l3.500 3.500L9 9V7C7 7 5 7.500 4 9.500z" /></svg>Share
            </ActionButton>
            <ActionButton $w={96}>
              <svg width="14" height="14" viewBox="0 0 14 14" fill="none" stroke="#979797"><path d="M1.500 1.500h11v8H7L4.500 12V9.500h-3z" /></svg>Comments
            </ActionButton>
          </TabActions>
        </TabRow>

        <Ribbon>
          <Tool $w={38}><VisualBasicIcon />{"Visual\nBasic"}</Tool>
          <Tool $w={45}><MacrosIcon />Macros</Tool>
          <MacroList>
            <MacroItem><RecordIcon />Record Macro</MacroItem>
            <MacroItem><RelativeIcon />Use Relative References</MacroItem>
          </MacroList>
          <Divider $l={0} $r={8} />
          <Tool $w={47}><AddinsIcon />Add-ins</Tool>
          <Tool $w={46}><GearIcon />{"Excel\nAdd-ins"}</Tool>
          <Divider $l={9} $r={10} />
          <Tool $w={37}><ButtonIcon />Button</Tool>
          <Tool $w={41}><GroupIcon />{"Group\nBox"}</Tool>
          <Tool $w={40}><ComboIcon />{"Combo\nBox"}</Tool>
          <Tool $w={39}><LabelIcon />Label</Tool>
          <Tool $w={38}><CheckIcon />{"Check\nBox"}</Tool>
          <Tool $w={37}><ScrollIcon />{"Scroll\nBar"}</Tool>
          <Tool $w={38}><ListIcon />{"List\nBox"}</Tool>
          <Tool $w={41}><OptionIcon />{"Option\nButton"}</Tool>
          <Tool $w={44}><SpinnerIcon />Spinner</Tool>
        </Ribbon>

        <FormulaBar>
          <NameBox>J20<svg width="8" height="20" viewBox="0 0 8 20" fill="#7c7c7c"><path d="M0 8l4-7 4 7zM0 13h8l-4 6z" /></svg></NameBox>
          <svg width="60" height="26" viewBox="0 0 60 26" fill="none" stroke="#5c5c5c" strokeWidth="2"><path d="M15.500 9l9.500 9.500M25 9l-9.500 9.500M44 14l4 4 8-9" /></svg>
          <Fx>fx</Fx>
          <FormulaInput />
          <svg width="14" height="26" viewBox="0 0 14 26"><path fill="#c4c4c4" d="M2.500 11.500h8L6.500 17z" /></svg>
        </FormulaBar>

        <Sheet>
          <SheetRow $h={22}>
            <Corner><svg width="15" height="15" viewBox="0 0 15 15"><path fill="#666" d="M15 0v15H0z" /></svg></Corner>
            {letters.map((c) => <ColHead key={c} $w={colWidth(c)} $on={c === "J"}>{c}</ColHead>)}
            <ColHead $w={24} />
          </SheetRow>
          {Array.from({ length: 39 }, (_, i) => <GridRow key={i} n={i + 1} />)}
          <SheetButton $x={451} $y={91} $w={193}>Run Analysis for all stocks</SheetButton>
          <SheetButton $x={493} $y={227} $w={200}>Clear Worksheet</SheetButton>
        </Sheet>

        <SheetTabs>
          <TabNav>
            <svg width="8" height="11" viewBox="0 0 8 11" fill="#666"><path d="M8 0v11L0 5.500z" /></svg>
            <svg width="8" height="11" viewBox="0 0 8 11" fill="#666"><path d="M0 0v11l8-5.500z" /></svg>
          </TabNav>
          <SheetTab $w={79}>2017</SheetTab>
          <SheetTab $w={79}>2018</SheetTab>
          <SheetTab $w={103}>DQ Analysis</SheetTab>
          <ActiveSheetTab>All Stocks Analysis</ActiveSheetTab>
          <AddSheet><svg width="10" height="10" viewBox="0 0 10 10" stroke="#b5b5b5" strokeWidth="2"><path d="M5 0v10M0 5h10" /></svg></AddSheet>
        </SheetTabs>

        <StatusBar>
          <StatusText $w={55}>Ready</StatusText>
          <svg width="16" height="15" viewBox="0 0 16 15" fill="none" stroke="#e6e6e6" strokeWidth="1.800"><circle cx="3" cy="2.800" r="2.300" fill="#e6e6e6" stroke="none" /><path d="M6 1.500h8.500v3.500M12 2v10.500c0 .8-.5 1-1 1H1.500v-1.500H10M4.500 6.500v6" /></svg>
          <Spacer />
          <ViewButton $w={37} $on><svg width="13" height="13" viewBox="0 0 13 13" fill="none" stroke="#fff"><path d="M.5 .5h12v12H.5zM.5 4.500h12M.5 8.500h12M4.500 .5v12M8.500 .5v12" /></svg></ViewButton>
          <ViewButton $w={34}><svg width="14" height="13" viewBox="0 0 14 13" fill="none" stroke="#e6e6e6"><path d="M.5 .5h13v12H.5zM3.500 2.500h7v8h-7zM5 4.500h4M5 6.500h4M5 8.500h4" /></svg></ViewButton>
          <ViewButton $w={38}><svg width="14" height="13" viewBox="0 0 14 13" fill="none" stroke="#e6e6e6"><path d="M.5 .5h13v12H.5zM.5 7.500h9M5.500 .5v7M9.500 .5v7" /></svg></ViewButton>
          <Zoom>
            <svg width="147" height="16" viewBox="0 0 147 16" stroke="#fff" strokeWidth="2">
              <path d="M0 8.500h8M122 8.500h8M126 4.500v8" /><path d="M18 8.500h94" stroke="#6f6f6f" strokeWidth="4" strokeLinecap="round" /><circle cx="65.500" cy="8" r="5.700" fill="#cacaca" stroke="none" />
            </svg>
          </Zoom>
          <StatusText $w={55}>100%</StatusText>
        </StatusBar>
      </Window>

      <Dock>
        {dock.map(([Icon, on], i) => <DockItem key={i} $running={on}><Icon /></DockItem>)}
        <DockLine $l={11} $r={10} />
        {dockRight.map((Icon, i) => <DockItem key={i} $running><Icon /></DockItem>)}
        <DockLine $l={11} $r={10} />
        <DockItem><Trash /></DockItem>
      </Dock>
    </Desktop>
  );
}
